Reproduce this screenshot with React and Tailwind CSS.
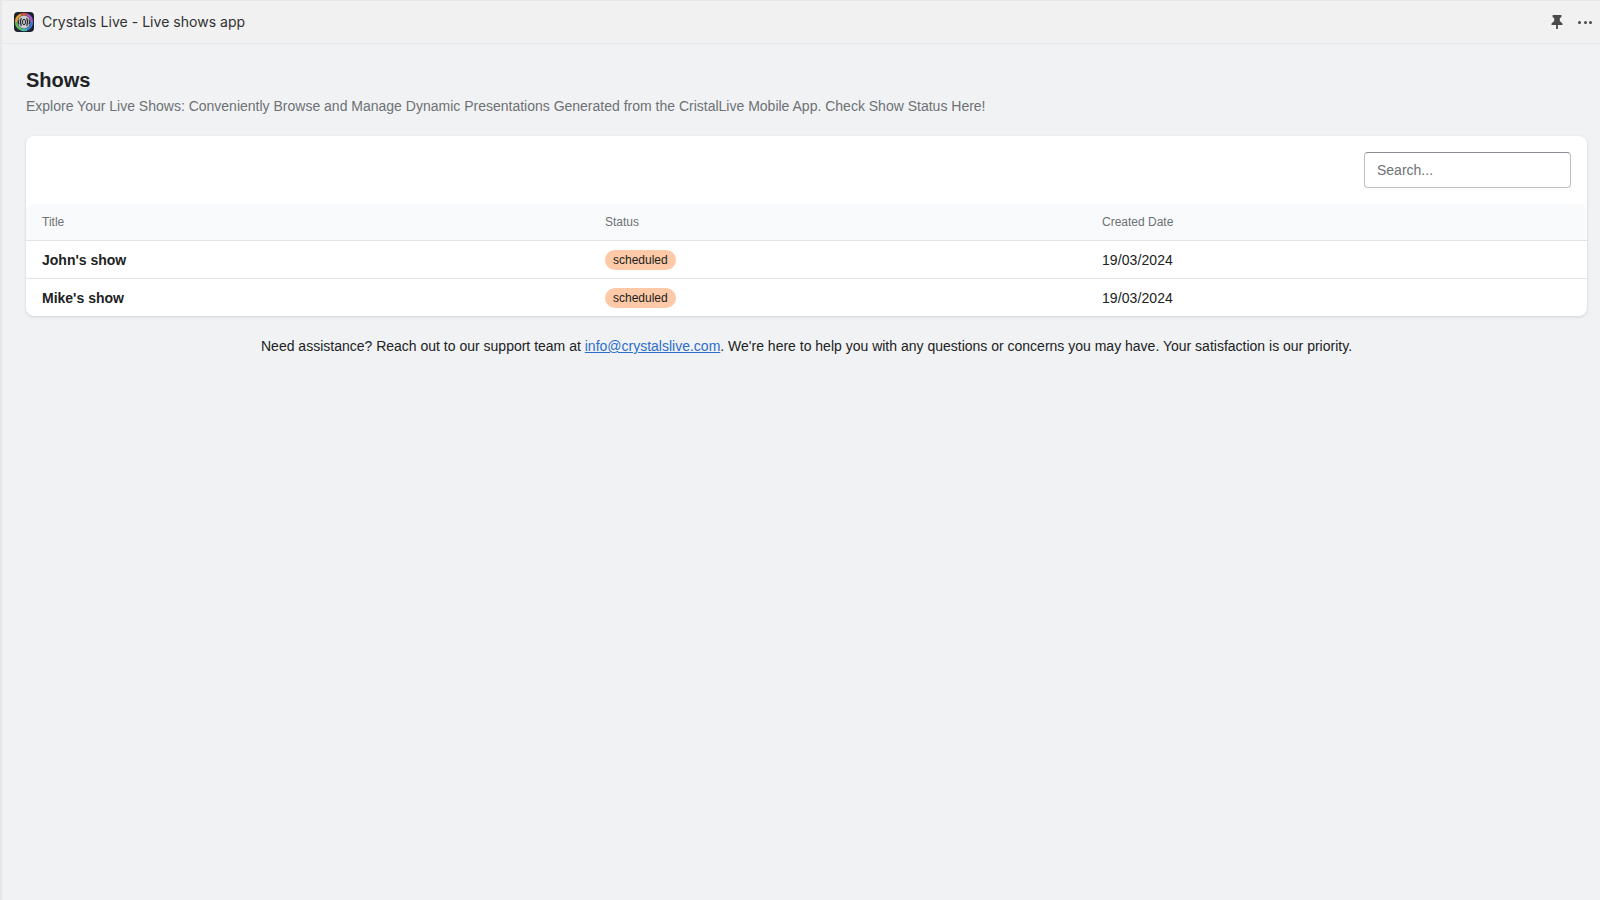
import React from "react";

function Logo() {
  return (
    <svg width="20" height="20" viewBox="0 0 20 20" className="shrink-0">
      <rect width="20" height="20" rx="4" fill="#1c2230" />
      <g fill="none" strokeWidth="2.6">
        <path d="M2.2 10A7.8 7.8 0 0 1 7 2.8" stroke="#e0a030" />
        <path d="M7 2.8A7.8 7.8 0 0 1 13 2.8" stroke="#c94f3d" />
        <path d="M13 2.8A7.8 7.8 0 0 1 17.8 10" stroke="#9a5cc4" />
        <path d="M17.8 10A7.8 7.8 0 0 1 13 17.2" stroke="#3a7bd5" />
        <path d="M13 17.2A7.8 7.8 0 0 1 7 17.2" stroke="#45b8a8" />
        <path d="M7 17.2A7.8 7.8 0 0 1 2.2 10" stroke="#5fb85a" />
      </g>
      <circle cx="10" cy="10" r="6.4" fill="#c9cacd" />
      <path d="M5 7.4C4.2 9 4.2 11 5 12.6M15 7.4C15.8 9 15.8 11 15 12.6M7.2 6C6.3 8.5 6.3 11.5 7.2 14M12.8 6C13.7 8.5 13.7 11.5 12.8 14" fill="none" stroke="#23262e" strokeWidth="1.2" />
      <ellipse cx="10" cy="10" rx="1.5" ry="2.8" fill="none" stroke="#23262e" strokeWidth="1" />
    </svg>
  );
}

function Pin() {
  return (
    <svg width="16" height="16" viewBox="0 0 16 16" fill="#4a4a4a">
      <path d="M3.6 1h8.8v2.2L10.8 4v3l2.7 2.4V11H8.9v4H7.1v-4H2.5V9.4L5.2 7V4L3.6 3.2z" />
    </svg>
  );
}

function Row({ title, last }) {
  const border = last ? "" : "border-b border-[#e1e3e5]";
  return (
    <tr className="h-[37.5px]">
      <td className={`px-4 pt-[2px] font-bold text-[#202223] ${border}`}>{title}</td>
      <td className={`px-4 ${border}`}>
        <span className="inline-flex h-5 items-center rounded-[10px] bg-[#fec9a6] px-2 text-xs text-[#202223]">scheduled</span>
      </td>
      <td className={`px-4 pt-[2px] tracking-[0.08px] text-[#202223] ${border}`}>19/03/2024</td>
      <td className={border}></td>
    </tr>
  );
}

export default function App() {
  return (
    <div className="flex min-h-[900px] flex-col border-l-2 border-[#e6e7e9] bg-[#f1f2f4] font-['Liberation_Sans',sans-serif] text-sm">
      <header className="flex h-11 items-center justify-between border-y border-[#e7e8ea] bg-[#f1f1f1] pl-3 pr-[5px]">
        <div className="flex items-center gap-2">
          <Logo />
          <span className="font-['Inter',sans-serif] text-sm tracking-[0.035px] text-[#303030]">Crystals Live - Live shows app</span>
        </div>
        <div className="flex items-center gap-[10px]">
          <Pin />
          <div className="flex h-5 w-5 items-center justify-center gap-[2.5px]">
            <span className="h-[3px] w-[3px] rounded-full bg-[#4a4a4a]" />
            <span className="h-[3px] w-[3px] rounded-full bg-[#4a4a4a]" />
            <span className="h-[3px] w-[3px] rounded-full bg-[#4a4a4a]" />
          </div>
        </div>
      </header>
      <main className="pl-6 pr-[13px] pt-[25px]">
        <h1 className="text-xl leading-[22px] font-bold text-[#202223]">Shows</h1>
        <p className="mt-[5px] leading-5 text-[#6d7175]">
          Explore Your Live Shows: Conveniently Browse and Manage Dynamic Presentations Generated from the CristalLive Mobile App. Check Show Status Here!
        </p>
        <section className="mt-5 rounded-lg bg-white shadow-[0_1px_3px_rgba(23,24,24,0.15)]">
          <div className="flex justify-end p-4">
            <input
              placeholder="Search..."
              className="h-9 w-[207px] rounded-[4px] border border-t-[#898f94] border-r-[#babfc3] border-b-[#babfc3] border-l-[#babfc3] bg-white px-3 text-sm text-[#202223] outline-none placeholder:text-[#6d7175]"
            />
          </div>
          <table className="w-full table-fixed border-separate border-spacing-0">
            <colgroup>
              <col className="w-[563px]" />
              <col className="w-[497px]" />
              <col className="w-[164px]" />
              <col />
            </colgroup>
            <thead>
              <tr className="h-[37px] bg-[#f9fafb]">
                <th className="rounded-tl-lg border-b border-[#e1e3e5] px-4 text-left text-xs font-normal text-[#6d7175]">Title</th>
                <th className="border-b border-[#e1e3e5] px-4 text-left text-xs font-normal text-[#6d7175]">Status</th>
                <th className="border-b border-[#e1e3e5] px-4 text-left text-xs font-normal whitespace-nowrap text-[#6d7175]">Created Date</th>
                <th className="rounded-tr-lg border-b border-[#e1e3e5]"></th>
              </tr>
            </thead>
            <tbody>
              <Row title="John's show" />
              <Row title="Mike's show" last />
            </tbody>
          </table>
        </section>
        <p className="mt-5 text-center leading-5 text-[#202223]">
          Need assistance? Reach out to our support team at{" "}
          <a href="#" className="text-[#2c6ecb] underline">info@crystalslive.com</a>
          . We're here to help you with any questions or concerns you may have. Your satisfaction is our priority.
        </p>
      </main>
    </div>
  );
}
